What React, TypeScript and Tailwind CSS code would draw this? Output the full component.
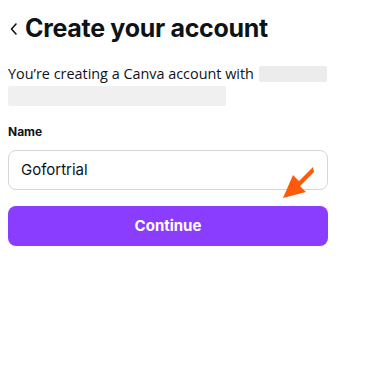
import React from "react";

export default function App() {
  return (
    <div className="w-[365px] h-[373px] bg-white relative" style={{ fontFamily: '"Open Sans", "Noto Sans", sans-serif' }}>
      <div className="pl-[8px] pr-[37px] pt-[11px]">
        <div className="flex items-center h-[36px]">
          <svg width="10" height="14" viewBox="0 0 10 14" className="ml-[1px] mr-[6px]">
            <path d="M7 2 L2.5 7 L7 12" fill="none" stroke="#0e1318" strokeWidth="1.6" strokeLinecap="round" strokeLinejoin="round" />
          </svg>
          <h1 className="text-[25px] font-bold text-[#0e1318] tracking-[-0.3px]" style={{ fontFamily: '"Inter", sans-serif' }}>
            Create your account
          </h1>
        </div>
        <div className="mt-[16px] text-[14.4px] leading-[21px] text-[#0e1318]">
          <div className="flex items-center whitespace-nowrap">
            <span>You’re creating a Canva account with</span>
            <span className="ml-[5px] inline-block w-[68px] h-[16px] bg-[#ececec] rounded-[2px]"></span>
          </div>
          <div className="mt-[2px] w-[218px] h-[20px] bg-[#f0f0f0] rounded-[2px]"></div>
        </div>
        <div className="mt-[17px] text-[12px] font-bold text-[#0e1318]" style={{ fontFamily: '"Inter", sans-serif' }}>Name</div>
        <div className="mt-[9px] h-[40px] w-[320px] rounded-[8px] border border-[#d6d6d8] flex items-center pl-[12px] text-[15px] text-[#0e1318]" style={{ fontFamily: '"Inter", sans-serif' }}>
          Gofortrial
        </div>
        <button className="mt-[16px] h-[40px] w-[320px] rounded-[8px] bg-[#8b3dff] text-white text-[15px] font-bold flex items-center justify-center" style={{ fontFamily: '"Inter", sans-serif' }}>
          Continue
        </button>
      </div>
      <svg className="absolute left-[280px] top-[164px]" width="40" height="40" viewBox="0 0 40 40">
        <path d="M33 3 L19 17 L13 11 L3 34 L26 28 L20 22 L34 8 Z" fill="#ff5a0a" />
      </svg>
    </div>
  );
}
